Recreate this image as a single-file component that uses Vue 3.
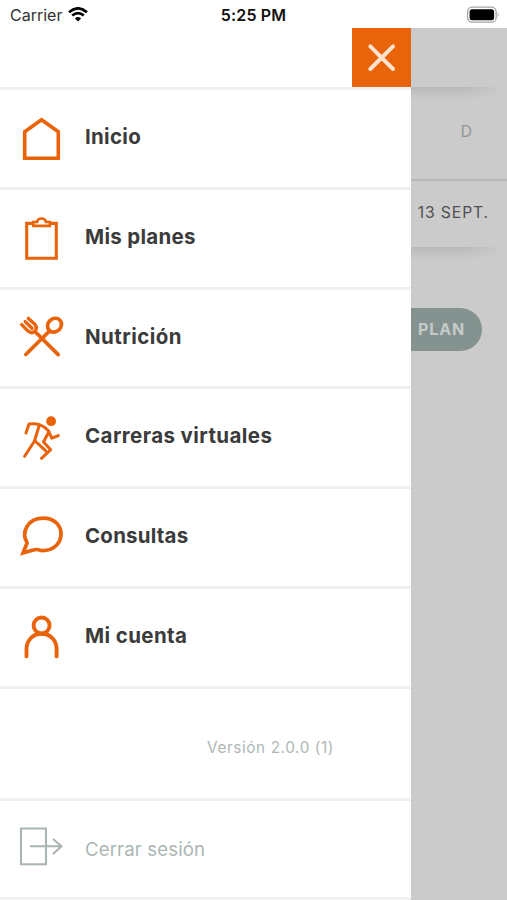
<script setup>
const items = [
  { label: 'Inicio', icon: 'home', height: 100, tracking: 0.3 },
  { label: 'Mis planes', icon: 'plans', height: 100, tracking: 0.3 },
  { label: 'Nutrición', icon: 'food', height: 99, tracking: 0.45 },
  { label: 'Carreras virtuales', icon: 'run', height: 100, tracking: 0.41 },
  { label: 'Consultas', icon: 'chat', height: 100, tracking: 0.2 },
  { label: 'Mi cuenta', icon: 'user', height: 100, tracking: 0.4 },
]
</script>

<template>
  <div class="screen">
    <header class="status">
      <div class="carrier">
        <span>Carrier</span>
        <svg width="20" height="15" viewBox="0 0 20 15" fill="none" stroke="#050505" stroke-width="2.6">
          <path d="M1 5.3Q10-2.7 19 5.3M4.2 8.6Q10 3.5 15.8 8.6" />
          <path d="M6.9 11.4Q10 8.6 13.1 11.4L10 14.5Z" fill="#050505" stroke="none" />
        </svg>
      </div>
      <span class="time">5:25 PM</span>
      <svg class="battery" width="34" height="18" viewBox="0 0 34 18">
        <rect x="1.6" y="1.2" width="28.5" height="15" rx="4.5" fill="#fff" stroke="#a4a4a4" stroke-width="1.3" />
        <rect x="3.6" y="3.2" width="24.5" height="11" rx="2.5" fill="#000" />
        <path d="M31.6 6.2Q33.6 8.7 31.6 11.2Z" fill="#a4a4a4" />
      </svg>
    </header>

    <div class="body">
      <nav class="drawer">
        <div class="top line">
          <button class="close" aria-label="Cerrar">
            <svg width="59" height="59" viewBox="0 0 59 59">
              <path d="M18.3 18.3 41 41M41 18.3 18.3 41" stroke="#ffe3cf" stroke-width="4" stroke-linecap="round" />
            </svg>
          </button>
        </div>

        <a v-for="item in items" :key="item.icon" class="row line" :style="{ height: item.height + 'px' }">
          <svg class="icon" width="48" height="48" viewBox="0 0 48 48" fill="none" stroke="#e8630a">
            <path v-if="item.icon === 'home'" d="M6.7 16.7 23.5 4.7 40.3 16.7V43.3H6.7Z" stroke-width="3.6" />
            <g v-else-if="item.icon === 'plans'" stroke-width="3.1">
              <path d="M16 8.4H8.7V43.3H38.3V8.4H31" />
              <path d="M15.3 10.9V7H19.1Q19.6 3.5 23.5 3.5T27.9 7H31.8V10.9Z" stroke-width="2.6" />
            </g>
            <g v-else-if="item.icon === 'food'" stroke-width="3.7" stroke-linecap="round" stroke-linejoin="round">
              <path d="M7.8 40.5 31.5 17M18.2 18.7 40.2 40.6" />
              <ellipse cx="36.5" cy="11.2" rx="7.4" ry="6.5" transform="rotate(-45 36.5 11.2)" />
              <path d="M3.7 10.6 9.5 16.6Q14.2 20.3 17 17.2T16.6 10L10.4 4.4M7.2 7.6 14 14.3" stroke-width="3.4" />
            </g>
            <g v-else-if="item.icon === 'run'" stroke-width="3" stroke-linecap="round" stroke-linejoin="round">
              <circle cx="33.1" cy="7.2" r="4.9" fill="#e8630a" stroke="none" />
              <path d="M8 19 11 10.1Q17.5 9.3 22 10.8T30.2 16.6L33.8 24.2 40.3 21.6" />
              <path d="M21.3 11.2 16.4 27.2 6.6 42.2" />
              <path d="M31 17.5 25.5 28 32.7 35.7 23.5 44.3M16.6 26.5 27.5 36.7" />
            </g>
            <path v-else-if="item.icon === 'chat'" d="M7.8 27.2C1.8 17.4 7.6 2.7 23.8 2.4 35.4 2.4 42 10.2 41.7 18.4 41.5 29.2 32.4 35.6 21.7 34.8Q17.2 33 13.9 34.4L3.8 37.3Z" transform="translate(1.3 1.7)" stroke-width="3.7" />
            <g v-else stroke-width="3.9" stroke-linecap="round">
              <circle cx="23.6" cy="11.5" r="8" />
              <path d="M8.5 42.4V35.5C8.5 26.5 14.7 19.8 23.6 19.8S38.6 26.5 38.6 35.5V42.4" />
            </g>
          </svg>
          <span class="label" :style="{ letterSpacing: item.tracking + 'px' }">{{ item.label }}</span>
        </a>

        <div class="version line">Versión 2.0.0 (1)</div>

        <a class="row line logout">
          <svg class="icon" width="48" height="48" viewBox="0 0 48 48" fill="none" stroke="#a8b5b1" stroke-width="2.1">
            <path d="M3 3.5H28V39.3H3ZM12 21.3H43M35 14 43.5 21.3 35 29" />
          </svg>
          <span class="label">Cerrar sesión</span>
        </a>
      </nav>

      <main class="page">
        <div class="toolbar"></div>
        <div class="weekday shaded">D</div>
        <div class="date">13 SEPT.</div>
        <div class="content shaded">
          <div class="plan">PLAN</div>
        </div>
      </main>
    </div>
  </div>
</template>

<style>
body { background: #fff; }
</style>

<style scoped>
* { box-sizing: border-box; }
.screen {
  width: 507px;
  height: 900px;
  overflow: hidden;
  background: #fff;
  font-family: Inter, "Open Sans", sans-serif;
}
.status {
  height: 28px;
  display: grid;
  grid-template-columns: 1fr auto 1fr;
  align-items: center;
  padding: 1px 7px 0 10px;
}
.carrier {
  display: flex;
  align-items: center;
  gap: 6px;
  font-size: 16px;
  color: #333;
}
.time { margin-right: 3px; font-size: 16px; font-weight: 600; letter-spacing: 0.15px; color: #111; }
.battery { justify-self: end; }
.body { display: flex; height: 872px; }
.drawer { width: 411px; flex: none; background: #fff; }
.line {
  border-bottom: 3px solid;
  border-image: linear-gradient(#f0f2f2, #e1e4e4 50%, #eff1f1) 3;
}
.top { height: 62px; display: flex; justify-content: flex-end; }
.close {
  width: 59px;
  height: 59px;
  padding: 0;
  border: 0;
  background: #e8630a;
}
.close svg { display: block; }
.row { display: flex; align-items: center; padding-left: 18px; }
.icon { flex: none; overflow: visible; }
.label {
  margin-left: 19px;
  padding-bottom: 3px;
  font-size: 20.5px;
  font-weight: 700;
  line-height: 26px;
  color: #3b3b3b;
  white-space: nowrap;
}
.version {
  height: 112px;
  padding: 7px 77px 0 0;
  display: flex;
  align-items: center;
  justify-content: flex-end;
  font-size: 15.3px;
  letter-spacing: 0.6px;
  color: #adb7b4;
}
.logout { height: 99px; }
.logout .label { padding: 0 0 1px; font-size: 18.6px; font-weight: 400; letter-spacing: 0.13px; color: #abb6b3; }
.page { flex: 1; background: #cbcbcb; overflow: hidden; }
.toolbar { height: 59px; }
.shaded {
  background:
    linear-gradient(to right, transparent 55%, #cbcbcb 96%) 0 0 / 100% 13px no-repeat,
    linear-gradient(#b9b9b9, #c2c2c2 45%, #cbcbcb) 0 0 / 100% 13px no-repeat;
}
.weekday {
  height: 94px;
  display: flex;
  align-items: center;
  justify-content: flex-end;
  padding: 0 35px 4px 0;
  border-bottom: 2px solid #b5b8b7;
  font-size: 16px;
  color: #929796;
}
.date {
  height: 66px;
  padding: 0 18px 4px 0;
  display: flex;
  align-items: center;
  justify-content: flex-end;
  font-size: 15.7px;
  letter-spacing: 0.9px;
  color: #505050;
  white-space: nowrap;
}
.content { height: 653px; padding-top: 61px; }
.plan {
  width: 71px;
  height: 43px;
  padding: 0 0 2px 7px;
  display: flex;
  align-items: center;
  border-radius: 0 22px 22px 0;
  background: #84938f;
  font-size: 16px;
  font-weight: 700;
  letter-spacing: 0.9px;
  color: #c4cbc9;
}
</style>
